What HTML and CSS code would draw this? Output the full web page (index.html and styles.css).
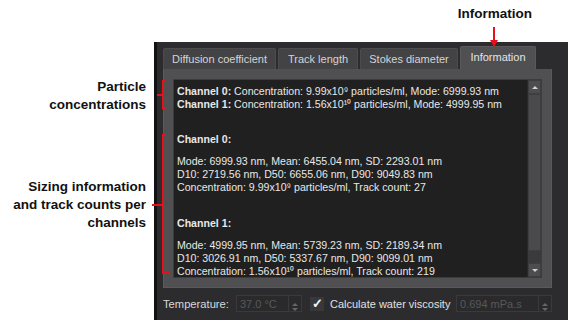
FILE: index.html
```html
<!doctype html>
<html lang="en">

<head>
    <meta charset="utf-8" />
    <meta name="viewport" content="width=device-width, initial-scale=1" />
    <title>Information tab</title>
    <link rel="stylesheet" href="styles.css">
</head>

<body>
    <div class="top">
        <strong class="callout">Information</strong>
    </div>

    <div class="main">
        <div class="notes">
            <p class="note note-conc">Particle<br>concentrations</p>
            <p class="note note-size">Sizing information<br>and track counts per<br>channels</p>
        </div>

        <div class="panel">
            <div class="tabs">
                <div class="tab" style="width: 113px">Diffusion coefficient</div>
                <div class="tab" style="width: 80px">Track length</div>
                <div class="tab" style="width: 98px">Stokes diameter</div>
                <div class="tab active" style="width: 76px">Information</div>
            </div>

            <div class="pane">
                <div class="textbox">
                    <div class="content">
                        <div class="summary">
                            <div><b>Channel 0:</b> Concentration: 9.99x10⁹ particles/ml, Mode: 6999.93 nm</div>
                            <div><b>Channel 1:</b> Concentration: 1.56x10¹⁰ particles/ml, Mode: 4999.95 nm</div>
                        </div>

                        <div class="channel-head"><b>Channel 0:</b></div>
                        <div class="details">
                            <div>Mode: 6999.93 nm, Mean: 6455.04 nm, SD: 2293.01 nm</div>
                            <div>D10: 2719.56 nm, D50: 6655.06 nm, D90: 9049.83 nm</div>
                            <div>Concentration: 9.99x10⁹ particles/ml, Track count: 27</div>
                        </div>

                        <div class="channel-head"><b>Channel 1:</b></div>
                        <div class="details">
                            <div>Mode: 4999.95 nm, Mean: 5739.23 nm, SD: 2189.34 nm</div>
                            <div>D10: 3026.91 nm, D50: 5337.67 nm, D90: 9099.01 nm</div>
                            <div>Concentration: 1.56x10¹⁰ particles/ml, Track count: 219</div>
                        </div>
                    </div>

                    <div class="scrollbar">
                        <div class="sb-btn"><span class="tri-up"></span></div>
                        <div class="sb-thumb"></div>
                        <div class="sb-track"></div>
                        <div class="sb-btn"><span class="tri-down"></span></div>
                    </div>
                </div>
            </div>

            <div class="controls">
                <span class="ctl-label">Temperature:</span>
                <div class="spin spin-temp">
                    <span>37.0 °C</span>
                    <div class="spin-arrows"><span class="tri-up small"></span><span class="tri-down small"></span></div>
                </div>
                <span class="check">✓</span>
                <span class="check-label">Calculate water viscosity</span>
                <div class="spin spin-visc">
                    <span>0.694 mPa.s</span>
                    <div class="spin-arrows"><span class="tri-up small"></span><span class="tri-down small"></span></div>
                </div>
            </div>
        </div>
    </div>

    <!-- red annotation marks drawn over the screenshot -->
    <svg class="marks" width="568" height="320" viewBox="0 0 568 320">
        <g stroke="#e8101a" stroke-width="2" fill="none">
            <line x1="494" y1="27" x2="494" y2="41" />
            <line x1="162" y1="81" x2="166" y2="81" />
            <line x1="163" y1="81" x2="163" y2="108" />
            <line x1="162" y1="108" x2="166" y2="108" />
            <line x1="157" y1="95" x2="163" y2="95" />
            <line x1="162" y1="135" x2="166" y2="135" />
            <line x1="163" y1="135" x2="163" y2="273" />
            <line x1="162" y1="273" x2="170" y2="273" />
            <line x1="152" y1="205" x2="163" y2="205" />
        </g>
        <polygon points="490,40 498,40 494,47" fill="#e8101a" />
    </svg>
</body>

</html>
```

FILE: styles.css
```css
body {
    margin: 0;
    width: 568px;
    height: 320px;
    overflow: hidden;
    background-color: #fff;
    font-family: "Liberation Sans", Arial, sans-serif;
    position: relative;
}

.top {
    height: 42px;
    display: flex;
    justify-content: flex-end;
    padding-right: 36px;
    box-sizing: border-box;
}

.callout {
    margin-top: 5px;
    font-size: 13.5px;
    line-height: 18px;
    color: #111;
}

.main {
    display: flex;
    height: 278px;
}

.notes {
    width: 154px;
    padding-right: 8px;
    box-sizing: border-box;
    text-align: right;
}

.note {
    margin: 0;
    font-weight: bold;
    font-size: 13.5px;
    line-height: 18px;
    color: #111;
}

.note-conc {
    margin-top: 36px;
}

.note-size {
    margin-top: 64px;
}

.panel {
    flex: 1;
    background-color: #2c2c2e;
    border-left: 3px solid #121212;
    padding: 4px 16px 0 6px;
    color: #dcdcdc;
    font-size: 11px;
}

.tabs {
    display: flex;
    align-items: flex-end;
    gap: 2px;
    height: 23px;
}

.tab {
    height: 21px;
    box-sizing: border-box;
    background-color: #434346;
    border: 1px solid #4c4c4f;
    border-bottom: none;
    border-radius: 2px 2px 0 0;
    text-align: center;
    line-height: 20px;
    color: #d4d4d4;
}

.tab.active {
    height: 23px;
    background-color: #505053;
    border-color: #5a5a5d;
    color: #e4e4e4;
    line-height: 21px;
}

.pane {
    width: 389px;
    height: 219px;
    box-sizing: border-box;
    background-color: #505053;
    border: 1px solid #5a5a5d;
    border-top: none;
    padding: 10px 9px 9px 9px;
}

.textbox {
    height: 100%;
    display: flex;
    background-color: #202020;
    border: 1px solid #3c3c3e;
    box-sizing: border-box;
}

.content {
    flex: 1;
    padding: 5px 3px;
    font-size: 10.6px;
    line-height: 13px;
    color: #e8e8e8;
    white-space: nowrap;
}

.summary {
    margin-bottom: 22px;
}

.channel-head {
    margin-bottom: 9px;
}

.details {
    margin-bottom: 23px;
}

.scrollbar {
    width: 13px;
    display: flex;
    flex-direction: column;
    background-color: #3a3a3c;
    border-left: 1px solid #2a2a2c;
}

.sb-btn {
    height: 14px;
    background-color: #4d4d50;
    display: flex;
    align-items: center;
    justify-content: center;
    border: 1px solid #3e3e40;
    box-sizing: border-box;
}

.sb-thumb {
    flex: 1;
    background-color: #4a4a4d;
    border: 1px solid #3e3e40;
}

.sb-track {
    height: 12px;
}

.tri-up,
.tri-down {
    width: 0;
    height: 0;
    border-left: 3px solid transparent;
    border-right: 3px solid transparent;
}

.tri-up {
    border-bottom: 3px solid #d0d0d0;
}

.tri-down {
    border-top: 3px solid #d0d0d0;
}

.tri-up.small {
    border-bottom-color: #666;
}

.tri-down.small {
    border-top-color: #666;
}

.controls {
    margin-top: 7px;
    width: 389px;
    height: 17px;
    display: flex;
    align-items: center;
}

.ctl-label {
    width: 73px;
    font-size: 11.2px;
    color: #d8d8d8;
}

.spin {
    height: 17px;
    box-sizing: border-box;
    border: 1px solid #3a3a3c;
    background-color: #2a2a2c;
    display: flex;
    align-items: center;
    padding-left: 3px;
    color: #58585a;
    font-size: 11px;
}

.spin span:first-child {
    flex: 1;
}

.spin-arrows {
    width: 12px;
    height: 15px;
    border-left: 1px solid #3a3a3c;
    display: flex;
    flex-direction: column;
    align-items: center;
    justify-content: center;
    gap: 2px;
}

.spin-temp {
    width: 66px;
}

.check {
    margin-left: 8px;
    width: 14px;
    height: 14px;
    background-color: #38383b;
    color: #f2f2f2;
    font-size: 13px;
    line-height: 14px;
    text-align: center;
    font-weight: bold;
}

.check-label {
    margin-left: 6px;
    font-size: 11px;
    color: #e0e0e0;
}

.spin-visc {
    width: 96px;
    margin-left: auto;
}

.marks {
    position: absolute;
    left: 0;
    top: 0;
    pointer-events: none;
}
```
